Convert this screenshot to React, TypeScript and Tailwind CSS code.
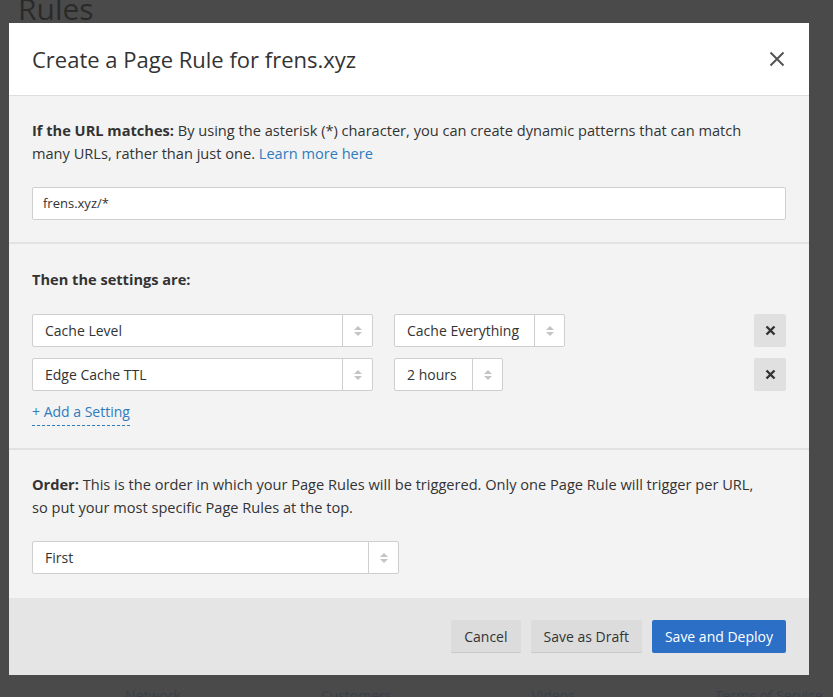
import React from "react";

const Sel = ({ label, w }: { label: string; w: string }) => (
  <div className={`flex h-[33px] ${w} bg-white border border-[#cfcfcf] rounded-[2px]`}>
    <div className="flex-1 flex items-center px-3 text-[14px] text-[#333]">{label}</div>
    <div className="w-[30px] border-l border-[#cfcfcf] flex flex-col items-center justify-center gap-[2px]">
      <svg width="8" height="4" viewBox="0 0 8 4"><path d="M0 4L4 0L8 4Z" fill="#c4c4c4" /></svg>
      <svg width="8" height="4" viewBox="0 0 8 4"><path d="M0 0L4 4L8 0Z" fill="#c4c4c4" /></svg>
    </div>
  </div>
);

const XBtn = () => (
  <div className="w-[32px] h-[33px] bg-[#e0e0e0] rounded-[2px] flex items-center justify-center">
    <svg width="11" height="11" viewBox="0 0 11 11"><path d="M1.5 1.5L9.5 9.5M9.5 1.5L1.5 9.5" stroke="#333" strokeWidth="2.4" /></svg>
  </div>
);

export default function App() {
  return (
    <div className="relative w-[833px] h-[697px] overflow-hidden bg-[#4a4a4a]" style={{ fontFamily: '"Open Sans", sans-serif' }}>
      <div className="absolute left-[18px] top-[-14px] text-[30px] text-[#2a2a2a]">Rules</div>
      <div className="absolute left-[125px] top-[685px] text-[14px] text-[#3a3f4a] flex gap-[140px]">
        <span>Network</span><span>Customers</span><span>Videos</span><span>Terms of Service</span>
      </div>
      <div className="absolute left-[9px] top-[23px] w-[800px] h-[652px] bg-[#f3f3f3] flex flex-col">
        <div className="h-[73px] bg-white border-b border-[#dedede] flex items-center justify-between pl-[23px] pr-[24px]">
          <div className="text-[22px] text-[#333]">Create a Page Rule for frens.xyz</div>
          <svg width="16" height="16" viewBox="0 0 16 16"><path d="M1.5 1.5L14.5 14.5M14.5 1.5L1.5 14.5" stroke="#555" strokeWidth="2" /></svg>
        </div>
        <div className="px-[23px] pt-[23px] pb-[22px] border-b-2 border-[#e2e2e2]">
          <p className="text-[14.6px] leading-[23px] text-[#333] pr-[20px]">
            <b>If the URL matches:</b> By using the asterisk (*) character, you can create dynamic patterns that can match many URLs, rather than just one. <span className="text-[#2f7bbf]">Learn more here</span>
          </p>
          <div className="mt-[22px] h-[33px] bg-white border border-[#cfcfcf] rounded-[2px] flex items-center px-[10px] text-[13px] text-[#333]">frens.xyz/*</div>
        </div>
        <div className="px-[23px] pt-[24px] pb-[22px] border-b-2 border-[#e2e2e2]">
          <div className="text-[14.6px] font-bold text-[#333] leading-[23px]">Then the settings are:</div>
          <div className="mt-[23px] flex flex-col gap-[11px]">
            <div className="flex items-center gap-[21px]">
              <Sel label="Cache Level" w="w-[341px]" />
              <Sel label="Cache Everything" w="w-[171px]" />
              <div className="flex-1" />
              <XBtn />
            </div>
            <div className="flex items-center gap-[21px]">
              <Sel label="Edge Cache TTL" w="w-[341px]" />
              <Sel label="2 hours" w="w-[109px]" />
              <div className="flex-1" />
              <XBtn />
            </div>
          </div>
          <div className="mt-[10px] inline-block text-[14px] text-[#2f7bbf] border-b border-dashed border-[#2f7bbf] leading-[22px] pb-[2px]">+ Add a Setting</div>
        </div>
        <div className="px-[23px] pt-[23px] flex-1">
          <p className="text-[14.6px] leading-[23px] text-[#333] pr-[20px]">
            <b>Order:</b> This is the order in which your Page Rules will be triggered. Only one Page Rule will trigger per URL, so put your most specific Page Rules at the top.
          </p>
          <div className="mt-[22px]"><Sel label="First" w="w-[367px]" /></div>
        </div>
        <div className="h-[77px] bg-[#e5e5e5] flex items-center justify-end gap-[10px] pr-[23px]">
          <div className="h-[33px] px-[13px] flex items-center bg-[#dcdcdc] border-b border-[#c8c8c8] rounded-[2px] text-[14px] text-[#333]">Cancel</div>
          <div className="h-[33px] px-[13px] flex items-center bg-[#dcdcdc] border-b border-[#c8c8c8] rounded-[2px] text-[14px] text-[#333]">Save as Draft</div>
          <div className="h-[33px] px-[13px] flex items-center bg-[#2b6fc7] rounded-[2px] text-[14px] text-white">Save and Deploy</div>
        </div>
      </div>
    </div>
  );
}
